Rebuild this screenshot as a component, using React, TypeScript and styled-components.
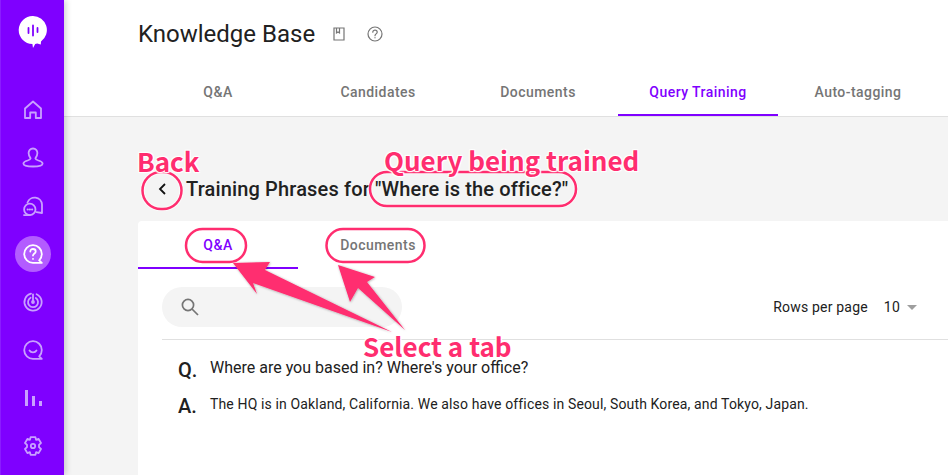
import React from "react";
import styled, { createGlobalStyle } from "styled-components";

const Global = createGlobalStyle`
  html, body { margin: 0; padding: 0; width: 948px; height: 475px; overflow: hidden; background: #f4f4f4; }
  #root { width: 948px; height: 475px; }
  * { box-sizing: border-box; }
`;

const Shell = styled.div`
  position: relative;
  display: flex;
  width: 948px;
  height: 475px;
  overflow: hidden;
  font-family: Roboto, "Liberation Sans", sans-serif;
  color: #212121;
`;

const Sidebar = styled.nav`
  position: relative;
  z-index: 2;
  flex: 0 0 64px;
  display: flex;
  flex-direction: column;
  align-items: center;
  background: #7f00ff;
  border-left: 1px solid #8a1cff;
  box-shadow: 2px 0 6px rgba(0, 0, 0, 0.18);
  padding-top: 15px;
`;

const Logo = styled.div`
  width: 32px;
  height: 34px;
  margin-bottom: 43px;
`;

const NavList = styled.div`
  display: flex;
  flex-direction: column;
  align-items: center;
  gap: 12px;
`;

const NavItem = styled.div<{ $active?: boolean }>`
  width: 36px;
  height: 36px;
  border-radius: 50%;
  display: flex;
  align-items: center;
  justify-content: center;
  background: ${(p) => (p.$active ? "#b35cff" : "transparent")};
  color: ${(p) => (p.$active ? "#ffffff" : "#c9a0ff")};
`;

const Main = styled.main`
  flex: 1;
  min-width: 0;
  display: flex;
  flex-direction: column;
`;

const Header = styled.header`
  height: 117px;
  background: #fff;
  border-bottom: 1px solid #e0e0e0;
  padding-left: 74px;
  display: flex;
  flex-direction: column;
`;

const TitleRow = styled.div`
  height: 68px;
  display: flex;
  align-items: center;
  gap: 16px;
`;

const PageTitle = styled.h1`
  margin: 0;
  font-size: 24px;
  font-weight: 400;
  line-height: 32px;
  color: #212121;
`;

const TitleIcon = styled.span<{ $gap?: number }>`
  display: inline-flex;
  color: #757575;
  margin-left: ${(p) => p.$gap ?? 0}px;
`;

const TabBar = styled.div`
  display: flex;
  height: 48px;
`;

const Tab = styled.div<{ $active?: boolean }>`
  width: 160px;
  height: 48px;
  padding-top: 1px;
  display: flex;
  align-items: center;
  justify-content: center;
  font-size: 14px;
  font-weight: 500;
  letter-spacing: 0.45px;
  color: ${(p) => (p.$active ? "#7f00ff" : "#757575")};
  border-bottom: 2px solid ${(p) => (p.$active ? "#7f00ff" : "transparent")};
`;

const Content = styled.section`
  flex: 1;
  background: #f4f4f4;
  padding: 0 0 0 74px;
  display: flex;
  flex-direction: column;
  min-width: 0;
`;

const TrainingHeader = styled.div`
  height: 104px;
  padding-top: 56px;
  display: flex;
  align-items: flex-start;
`;

const BackButton = styled.div`
  height: 32px;
  flex: 0 0 48px;
  display: flex;
  align-items: center;
  justify-content: center;
  color: #111;
`;

const TrainingTitle = styled.h2`
  margin: 0;
  font-size: 20px;
  font-weight: 500;
  line-height: 32px;
  letter-spacing: 0.15px;
  color: #212121;
  white-space: nowrap;
`;

const Card = styled.div`
  flex: 1;
  background: #fff;
  border-radius: 4px 0 0 0;
  display: flex;
  flex-direction: column;
`;

const CardTabs = styled.div`
  display: flex;
  height: 48px;
`;

const Toolbar = styled.div`
  margin: 18px 0 0 24px;
  height: 53px;
  border-bottom: 1px solid #e0e0e0;
  display: flex;
  align-items: flex-start;
  justify-content: space-between;
`;

const SearchPill = styled.div`
  width: 240px;
  height: 40px;
  border-radius: 20px;
  background: #f4f4f4;
  display: flex;
  align-items: center;
  padding-left: 18px;
  color: #757575;
`;

const RowsControl = styled.div`
  display: flex;
  align-items: center;
  height: 40px;
  padding-right: 31px;
  font-size: 14px;
  letter-spacing: 0.2px;
  color: #212121;
`;

const RowsValue = styled.span`
  margin-left: 16px;
  margin-right: 7px;
`;

const Caret = styled.span`
  width: 0;
  height: 0;
  border-left: 5px solid transparent;
  border-right: 5px solid transparent;
  border-top: 5px solid #9e9e9e;
`;

const Faq = styled.div`
  margin-left: 40px;
  display: grid;
  grid-template-columns: 32px 1fr;
  row-gap: 10px;
  padding-top: 16px;
  align-items: start;
`;

const Mark = styled.span`
  margin-top: 2px;
  font-size: 20px;
  font-weight: 500;
  line-height: 24px;
  color: #212121;
`;

const Question = styled.span`
  font-size: 16px;
  line-height: 24px;
  color: #212121;
`;

const Answer = styled.span`
  font-size: 14px;
  line-height: 24px;
  letter-spacing: 0.14px;
  color: #212121;
`;

const Overlay = styled.svg`
  position: absolute;
  inset: 0;
  z-index: 3;
  pointer-events: none;
`;

const Callout = styled.span<{ $x: number; $y: number }>`
  position: absolute;
  z-index: 4;
  left: ${(p) => p.$x}px;
  top: ${(p) => p.$y}px;
  font-family: "Noto Sans CJK KR", "Noto Sans", sans-serif;
  font-size: 26px;
  font-weight: 700;
  line-height: 28px;
  color: #ff2d6f;
  white-space: nowrap;
  text-shadow: 0 0 2px #fff, 1px 1px 1px #fff, -1px -1px 1px #fff, 1px -1px 1px #fff, -1px 1px 1px #fff;
`;

const Ico = ({ children }: { children: React.ReactNode }) => (
  <svg width="22" height="22" viewBox="0 0 22 22" fill="none" stroke="currentColor" strokeWidth="1.8" strokeLinejoin="round" strokeLinecap="round">
    {children}
  </svg>
);

const tabs = ["Q&A", "Candidates", "Documents", "Query Training", "Auto-tagging"];

export default function App() {
  return (
    <Shell>
      <Global />
      <Sidebar>
        <Logo>
          <svg width="32" height="34" viewBox="0 0 32 34">
            <path d="M16 1a14 14 0 0 1 8 25.4l-.2 3-3.6-.9a14 14 0 0 1-2 .4L16 33l-.6-4A14 14 0 0 1 16 1z" fill="#fff" />
            <path d="M11.5 13v5M16 10.5v10M20.5 13v4" stroke="#7f00ff" strokeWidth="1.8" strokeLinecap="round" />
          </svg>
        </Logo>
        <NavList>
          <NavItem>
            <Ico><path d="M3 19V9.5L11 2.5l8 7V19h-5.2v-5.5H8.2V19z" /></Ico>
          </NavItem>
          <NavItem>
            <Ico>
              <path d="M11 1.5C8.2 1.5 6.6 3.5 6.6 6.1c0 2.3 1 4 2 5.2-.1 1-.8 1.4-3 2.2C3.4 14.2 1.4 15 1.4 16.5c0 2 4 3 9.6 3s9.6-1 9.6-3c0-1.5-2-2.3-4.2-3-2.2-.8-2.9-1.2-3-2.2 1-1.2 2-2.9 2-5.2 0-2.6-1.6-4.6-4.4-4.6z" />
            </Ico>
          </NavItem>
          <NavItem>
            <Ico>
              <path d="M5.5 7.5A7.5 7.5 0 0 1 20 9.5V18l-5.5-.8" />
              <circle cx="7.8" cy="14.4" r="5.7" />
              <path d="M2 20.1h5.8" />
              <path d="M5.6 14.4h.2M7.8 14.4h.2M10 14.4h.2" strokeWidth="2" />
            </Ico>
          </NavItem>
          <NavItem $active>
            <Ico>
              <path d="M19.8 19.8h-8.6a8.8 8.8 0 1 1 8.6-8.8c0 2.6-.9 4.6-2.6 6.4l2.6 2.4z" />
              <path d="M8.3 8.6c0-1.6 1.2-2.6 2.7-2.6s2.7 1 2.7 2.4c0 2-2.7 2.2-2.7 4.2" />
              <path d="M11 15.8v.1" />
            </Ico>
          </NavItem>
          <NavItem>
            <Ico>
              <path d="M9 2.7A8.6 8.6 0 1 0 14.6 3.2" />
              <path d="M8.6 6.8A5 5 0 1 0 13.8 7" />
              <path d="M11 3.5v7.5" />
              <circle cx="11" cy="11" r="1" fill="currentColor" />
            </Ico>
          </NavItem>
          <NavItem>
            <Ico>
              <path d="M19.8 19.8h-8.6a8.8 8.8 0 1 1 8.6-8.8c0 2.6-.9 4.6-2.6 6.4l2.6 2.4z" />
              <path d="M7.5 11.5c1.5 2.4 5.5 2.4 7 0" />
            </Ico>
          </NavItem>
          <NavItem>
            <svg width="22" height="22" viewBox="0 0 22 22" fill="currentColor">
              <rect x="3" y="3" width="3" height="16" />
              <rect x="10" y="9" width="3" height="10" />
              <rect x="17" y="14" width="3" height="5" />
            </svg>
          </NavItem>
          <NavItem>
            <Ico>
              <path d="M8.6 2.2h4.8l.7 2.6 2.5-.9 2.4 4.1-2 1.8v2.4l2 1.8-2.4 4.1-2.5-.9-.7 2.6H8.6l-.7-2.6-2.5.9L3 14l2-1.8V9.8L3 8l2.4-4.1 2.5.9z" />
              <circle cx="11" cy="11" r="2.2" />
            </Ico>
          </NavItem>
        </NavList>
      </Sidebar>

      <Main>
        <Header>
          <TitleRow>
            <PageTitle>Knowledge Base</PageTitle>
            <TitleIcon>
              <svg width="16" height="16" viewBox="0 0 16 16" fill="none" stroke="currentColor" strokeWidth="1.2">
                <path d="M3 2h10v12H3z" />
                <path d="M5.5 2v5l1.5-1 1.5 1V2" />
              </svg>
            </TitleIcon>
            <TitleIcon $gap={3}>
              <svg width="18" height="18" viewBox="0 0 18 18" fill="none" stroke="currentColor" strokeWidth="1.2" strokeLinecap="round">
                <circle cx="9" cy="9" r="7" />
                <path d="M6.8 7.2C6.8 6 7.8 5.2 9 5.2s2.2.8 2.2 2c0 1.7-2.2 1.7-2.2 3.5" />
                <path d="M9 12.7v.1" />
              </svg>
            </TitleIcon>
          </TitleRow>
          <TabBar>
            {tabs.map((t) => (
              <Tab key={t} $active={t === "Query Training"}>{t}</Tab>
            ))}
          </TabBar>
        </Header>
        <Content>
          <TrainingHeader>
            <BackButton>
              <svg width="12" height="14" viewBox="0 0 12 14" fill="none" stroke="currentColor" strokeWidth="1.8">
                <path d="M9 2L4 7l5 5" />
              </svg>
            </BackButton>
            <TrainingTitle>Training Phrases for "Where is the office?"</TrainingTitle>
          </TrainingHeader>
          <Card>
            <CardTabs>
              <Tab $active>Q&amp;A</Tab>
              <Tab>Documents</Tab>
            </CardTabs>
            <Toolbar>
              <SearchPill>
                <svg width="20" height="20" viewBox="0 0 20 20" fill="none" stroke="currentColor" strokeWidth="1.7">
                  <circle cx="8" cy="8" r="5.6" />
                  <path d="M12 12l6 6" />
                </svg>
              </SearchPill>
              <RowsControl>
                Rows per page
                <RowsValue>10</RowsValue>
                <Caret />
              </RowsControl>
            </Toolbar>
            <Faq>
              <Mark>Q.</Mark>
              <Question>Where are you based in? Where's your office?</Question>
              <Mark>A.</Mark>
              <Answer>The HQ is in Oakland, California. We also have offices in Seoul, South Korea, and Tokyo, Japan.</Answer>
            </Faq>
          </Card>
        </Content>
      </Main>

      <Overlay width="948" height="475" viewBox="0 0 948 475">
        <defs>
          <filter id="sh" x="-10%" y="-10%" width="120%" height="120%">
            <feDropShadow dx="0.5" dy="0.5" stdDeviation="1" floodColor="#000" floodOpacity="0.35" />
          </filter>
        </defs>
        <g fill="none" stroke="#ffffff" strokeOpacity="0.6" strokeWidth="4.5">
          <rect x="142.5" y="172" width="39" height="37" rx="18.5" />
          <rect x="370" y="172" width="206" height="34" rx="17" />
          <rect x="186" y="229" width="60" height="33" rx="16.5" />
          <rect x="326.5" y="229" width="98" height="33" rx="16.5" />
        </g>
        <g fill="none" stroke="#ff2d6f" strokeWidth="2.5">
          <rect x="142.5" y="172" width="39" height="37" rx="18.5" />
          <rect x="370" y="172" width="206" height="34" rx="17" />
          <rect x="186" y="229" width="60" height="33" rx="16.5" />
          <rect x="326.5" y="229" width="98" height="33" rx="16.5" />
        </g>
        <g fill="#ff2d6f" filter="url(#sh)">
          <path d="M233 263L270 262L265 270L392 332L253 283L257 294z" />
          <path d="M338 265L375 277L367 282L405 330L358 288L350 302z" />
        </g>
      </Overlay>
      <Callout $x={137} $y={147}>Back</Callout>
      <Callout $x={384} $y={146}>Query being trained</Callout>
      <Callout $x={363} $y={332}>Select a tab</Callout>
    </Shell>
  );
}
